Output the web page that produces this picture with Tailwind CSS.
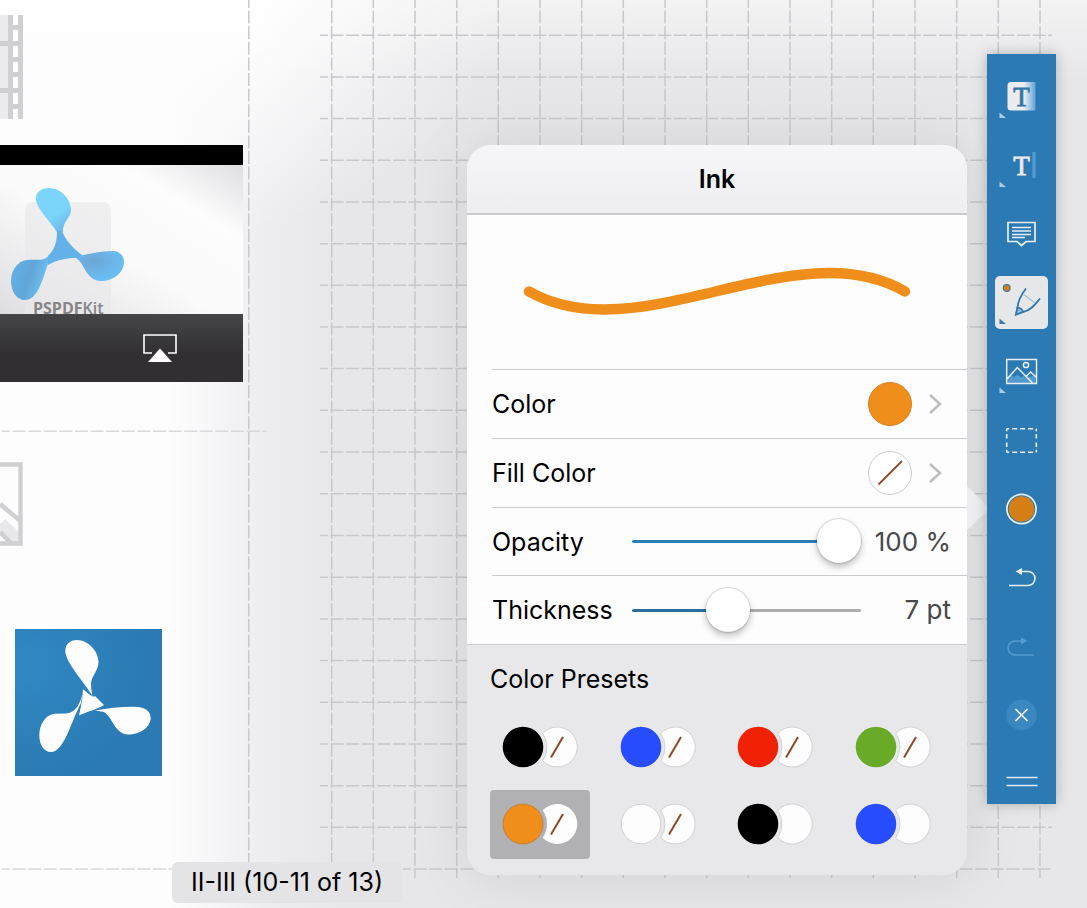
<!DOCTYPE html>
<html lang="en">
<head>
<meta charset="utf-8">
<meta name="viewport" content="width=device-width, initial-scale=1">
<title>Ink annotation inspector</title>
<script src="https://cdn.jsdelivr.net/npm/@tailwindcss/browser@4"></script>
</head>
<body class="bg-[#e6e6e8] font-['Inter','Liberation_Sans',sans-serif] text-black">
<main class="relative flex min-h-screen items-start overflow-hidden">

  <!-- Page paper with guide lines -->
  <div class="absolute inset-0 bg-linear-to-r from-[#fdfdfe] from-[170px] via-[#eeeef0] via-[260px] to-[#e7e7e9] to-[340px]"></div>
  <div class="absolute inset-x-0 top-0 h-72 bg-[radial-gradient(ellipse_340px_240px_at_160px_0px,#fdfdfe_30%,transparent)]"></div>
  <div class="absolute inset-x-0 top-0 h-20 bg-linear-to-b from-white/50 to-transparent"></div>
  <svg class="absolute inset-0 h-full w-full" fill="none" stroke="#c9c9cc" stroke-width="1.5" stroke-dasharray="13 2.6" aria-hidden="true">
    <g stroke-dashoffset="5">
      <path d="M320 35.3H1052M320 77H1052M320 118.5H1052M320 160.3H1052M320 202H1052M320 243.7H1052M320 285.3H1052M320 327H1052M320 368.6H1052M320 410.3H1052M320 452H1052M320 493.8H1052M320 535.5H1052M320 577.2H1052M320 619H1052M320 660.6H1052M320 702.3H1052M320 744H1052M320 785.7H1052M320 827.3H1052M403 869H1052"/>
      <path d="M248.8 0V862M331.7 0V862M373.3 0V862M415 0V878M456.8 0V878M498.3 0V878M540 0V878M581.7 0V878M623.3 0V878M665 0V878M706.7 0V878M748.3 0V878M790 0V878M831.7 0V878M873.3 0V878M915 0V878M956.7 0V878M998.3 0V878M1040 0V878"/>
      <path stroke="#d9d9dc" d="M2 431.3H267M2 869H172"/>
    </g>
  </svg>

  <!-- Document content -->
  <section class="relative flex w-[243px] shrink-0 flex-col items-start pt-[15px]" aria-label="Document page">
    <svg class="h-[104px] w-6" viewBox="0 0 24 104" aria-hidden="true">
      <path d="M0 0H8V104H0Z" fill="#ececee"/>
      <path d="M8 0H13V104H8ZM18 0H23V104H18ZM0 26H18V31H0ZM0 73H18V78H0ZM13 10H18V15H13ZM13 42H18V47H13ZM13 57H18V62H13ZM13 89H18V94H13Z" fill="#d0d0d3"/>
    </svg>
    <div class="mt-[26px] w-full">
      <div class="h-5 bg-black"></div>
      <svg class="block h-[149px] w-full overflow-visible" viewBox="0 165 243 149" role="img" aria-label="PSPDFKit video">
        <defs>
          <linearGradient id="d" x1="0" y1="1" x2="1" y2="0"><stop offset="0" stop-color="#dedee0"/><stop offset=".45" stop-color="#fafafb"/><stop offset=".75" stop-color="#fdfdfe"/><stop offset="1" stop-color="#dfdfe1"/></linearGradient>
          <linearGradient id="b1" x1="0" y1="0" x2=".6" y2="1"><stop offset=".7" stop-color="#7bd4fc"/><stop offset="1" stop-color="#6dbcee"/></linearGradient>
          <radialGradient id="b2" cx=".4" cy=".35" r=".6"><stop offset="0" stop-color="#6ca6d6"/><stop offset="1" stop-color="#6bbef2"/></radialGradient>
          <linearGradient id="b3" x1="0" y1="0" x2="1" y2=".4"><stop offset="0" stop-color="#61b3ea"/><stop offset=".6" stop-color="#62a5d6"/><stop offset="1" stop-color="#6cc5f5"/></linearGradient>
        </defs>
        <path fill="url(#d)" d="M0 165H243V314H0Z"/>
        <path d="M25 314V211Q25 202 34 202H102Q111 202 111 211V314Z" fill="#e8e8ea" opacity=".65"/>
        <path fill="url(#b1)" d="M57 232C50 221 36 208 36 199C36 192 41 188 49 188C61 188 71 199 71 210C71 218 62 222 63 232Z"/>
        <path fill="url(#b3)" d="M49 255C44 262 36 259 27 260C17 261 11 271 11 281C11 292 17 300 25 300C38 300 42 280 48 264Z"/>
        <path fill="url(#b2)" d="M73 257C86 255 98 251 113 251C120 251 124 256 124 262C124 273 113 281 101 281C86 281 84 262 76 258Z"/>
        <path fill="#62b1e8" d="M57 231H62C66 241 74 249 82 255C82 257 79 258 75 258C66 258 57 260 48 265L48 256C55 249 57 242 57 231Z"/>
        <text x="33" y="314" font-family="Open Sans" font-weight="700" font-size="16" fill="#858588">PSPDF<tspan font-weight="600">Kit</tspan></text>
      </svg>
      <div class="flex h-[68px] items-center justify-end bg-linear-to-b from-[#454447] to-[#312f32] to-60% pr-[65px]">
        <button type="button" aria-label="AirPlay" class="block">
          <svg class="block h-[30px] w-9" viewBox="0 0 36 30" fill="none"><path d="M10 20H2V2H34V20H26" stroke="#fff" stroke-width="1.6"/><path d="M6 29L18 15.500L30 29Z" fill="#fff"/></svg>
        </button>
      </div>
    </div>
    <svg class="mt-20 block h-[84px] w-6" viewBox="0 0 24 84" fill="none" aria-hidden="true">
      <path d="M0 62L5 57L21 72V80H8L0 72Z" fill="#e9e9eb"/>
      <path d="M0 2.500H20.500V81.500H0M0 42L21 59.500M0 70L11 81" stroke="#d0d0d3" stroke-width="4.500"/>
    </svg>
    <svg class="mt-[83px] ml-[15px] block size-[147px]" viewBox="15 629 147 147" role="img" aria-label="PSPDFKit logo">
      <defs><radialGradient id="bg" cx=".1" cy=".25" r=".8"><stop offset="0" stop-color="#3088c3"/><stop offset="1" stop-color="#2b7ab3"/></radialGradient></defs>
      <path fill="url(#bg)" d="M15 629H162V776H15Z"/>
      <g fill="#fdfdfe">
        <path d="M92.500 696C84 682 65.300 662 65.300 651C65.300 644 70 640 77 640C88 640 98.500 651 98.500 662C98.500 671 91 676 91 684C91 689 92 692 92.500 696Z"/>
        <path d="M83 689C90 695 93 698 95 696L104 705C96 710 88 711 79 715.500L82 701Z"/>
        <path d="M83 689C81 706 74 713 66 713.500L54 713.700C45 715 39.300 725 39.300 735C39.300 745 44 752 51 752C64 752 70 724 81 703Z"/>
        <path d="M95 710.500C109 708 121 706.500 134 706.700C145 706.700 150.700 711 150.700 718C150.700 727 140 734.500 128 734.500C113 734 112 712 101 711.500Z"/>
      </g>
    </svg>
  </section>

  <p class="absolute bottom-[5px] left-[172px] rounded-md bg-[#e4e4e6] px-[19px] py-1.5 text-[25px] leading-[29px] whitespace-nowrap">II-III (10-11 of 13)</p>

  <!-- Ink inspector popover -->
  <section class="relative mt-[145px] mr-5 ml-auto w-[500px] shrink-0 rounded-[24px] shadow-[0_0_60px_rgba(0,0,0,0.1)]" aria-labelledby="title">
    <svg class="absolute top-[341px] left-full h-11 w-5" viewBox="0 0 20 44" aria-hidden="true"><path d="M0 0L20 20V25L0 44Z" fill="#ededef"/></svg>
    <div class="overflow-hidden rounded-[24px] bg-[#e8e8ea]">
      <header class="flex h-[70px] items-center justify-center border-b-2 border-[#cacacd] bg-linear-to-b from-[#f6f6f8] to-[#eeeef0]">
        <h1 id="title" class="text-[25px] leading-8 font-semibold">Ink</h1>
      </header>
      <div class="bg-[#fdfdfe]">
        <svg class="block h-[154px] w-full" viewBox="0 0 500 154" fill="none" role="img" aria-label="Stroke preview">
          <path d="M62 76.500C172 139 328 13 438 76.500" stroke="#ef8e1b" stroke-width="10.500" stroke-linecap="round"/>
        </svg>
        <div class="ml-[25px] text-[25px] leading-8">
          <button type="button" class="flex h-[69px] w-full items-center border-t border-[#cbcbce] pr-6">
            <span>Color</span>
            <span class="ml-auto size-11 rounded-full border border-[#d5831e] bg-[#ef8e1b]"></span>
            <svg class="ml-[15px] h-6 w-4" viewBox="0 0 16 24" fill="none"><path d="M3 3L13 12L3 21" stroke="#bdbdc0" stroke-width="2.500"/></svg>
          </button>
          <button type="button" class="flex h-[69px] w-full items-center border-t border-[#cbcbce] pr-6">
            <span>Fill Color</span>
            <svg class="ml-auto size-11" viewBox="0 0 44 44" fill="none"><circle cx="22" cy="22" r="21.500" fill="#fff" stroke="#cfcfd4"/><path d="M10.500 33.500L34 10" stroke="#8b4a24" stroke-width="1.800"/></svg>
            <svg class="ml-[15px] h-6 w-4" viewBox="0 0 16 24" fill="none"><path d="M3 3L13 12L3 21" stroke="#bdbdc0" stroke-width="2.500"/></svg>
          </button>
          <div class="flex h-[68px] items-center border-t border-[#cbcbce] pr-4">
            <label for="opacity" class="w-[140px]">Opacity</label>
            <input id="opacity" type="range" min="0" max="100" value="100" class="h-11 w-[229px] cursor-pointer appearance-none bg-transparent [&::-webkit-slider-runnable-track]:h-[3px] [&::-webkit-slider-runnable-track]:rounded-full [&::-webkit-slider-runnable-track]:bg-[#2b7fb8] [&::-webkit-slider-thumb]:-mt-[21px] [&::-webkit-slider-thumb]:size-11 [&::-webkit-slider-thumb]:appearance-none [&::-webkit-slider-thumb]:rounded-full [&::-webkit-slider-thumb]:bg-white [&::-webkit-slider-thumb]:shadow-[0_0_1px_1px_rgba(0,0,0,0.12),0_4px_7px_rgba(0,0,0,0.25)]">
            <output for="opacity" class="ml-auto text-[26px] text-[#48484b]">100 %</output>
          </div>
          <div class="flex h-[69px] items-center border-t border-[#cbcbce] pr-4">
            <label for="thickness" class="w-[140px]">Thickness</label>
            <input id="thickness" type="range" min="0" max="100" value="40" class="h-11 w-[229px] cursor-pointer appearance-none bg-transparent [&::-webkit-slider-runnable-track]:h-[3px] [&::-webkit-slider-runnable-track]:rounded-full [&::-webkit-slider-runnable-track]:bg-[linear-gradient(to_right,#2b6f9f_40%,#acacae_40%)] [&::-webkit-slider-thumb]:-mt-[21px] [&::-webkit-slider-thumb]:size-11 [&::-webkit-slider-thumb]:appearance-none [&::-webkit-slider-thumb]:rounded-full [&::-webkit-slider-thumb]:bg-white [&::-webkit-slider-thumb]:shadow-[0_0_1px_1px_rgba(0,0,0,0.12),0_4px_7px_rgba(0,0,0,0.25)]">
            <output for="thickness" class="ml-auto text-[26px] text-[#48484b]">7 pt</output>
          </div>
        </div>
      </div>
      <div class="border-t border-[#cbcbce] pt-[18px] pr-6 pb-4 pl-[23px]">
        <svg class="hidden" aria-hidden="true">
          <defs>
            <path id="fill" d="M52.700 20.300A20 20 0 1 1 52.700 47.700A24 24 0 0 0 52.700 20.300Z"/>
            <path id="slash" d="M61 44.500L73 24" stroke="#8b4a24" stroke-width="2"/>
          </defs>
        </svg>
        <h2 class="text-[25px] leading-8">Color Presets</h2>
        <div class="mt-[18px] grid grid-cols-[repeat(4,100px)] justify-between gap-y-2">
          <button type="button" aria-label="Black, no fill" class="rounded"><svg class="h-[69px] w-[100px]" viewBox="0 0 100 69"><use href="#fill" fill="#fdfdfe" stroke="#d2d2d5"/><circle cx="33" cy="34" r="20.300"/><use href="#slash"/></svg></button>
          <button type="button" aria-label="Blue, no fill" class="rounded"><svg class="h-[69px] w-[100px]" viewBox="0 0 100 69"><use href="#fill" fill="#fdfdfe" stroke="#d2d2d5"/><circle cx="33" cy="34" r="20.300" fill="#274dfe"/><use href="#slash"/></svg></button>
          <button type="button" aria-label="Red, no fill" class="rounded"><svg class="h-[69px] w-[100px]" viewBox="0 0 100 69"><use href="#fill" fill="#fdfdfe" stroke="#d2d2d5"/><circle cx="33" cy="34" r="20.300" fill="#f12106"/><use href="#slash"/></svg></button>
          <button type="button" aria-label="Green, no fill" class="rounded"><svg class="h-[69px] w-[100px]" viewBox="0 0 100 69"><use href="#fill" fill="#fdfdfe" stroke="#d2d2d5"/><circle cx="33" cy="34" r="20.300" fill="#6aaa29"/><use href="#slash"/></svg></button>
          <button type="button" aria-label="Orange, no fill" aria-pressed="true" class="rounded bg-[#b1b1b3]"><svg class="h-[69px] w-[100px]" viewBox="0 0 100 69"><use href="#fill" fill="#fdfdfe"/><circle cx="33" cy="34" r="20" fill="#ef8e1b" stroke="#b87a35" stroke-width=".7"/><use href="#slash"/></svg></button>
          <button type="button" aria-label="White, no fill" class="rounded"><svg class="h-[69px] w-[100px]" viewBox="0 0 100 69"><use href="#fill" fill="#fdfdfe" stroke="#d2d2d5"/><circle cx="33" cy="34" r="19.800" fill="#fdfdfe" stroke="#d2d2d5"/><use href="#slash"/></svg></button>
          <button type="button" aria-label="Black, white fill" class="rounded"><svg class="h-[69px] w-[100px]" viewBox="0 0 100 69"><use href="#fill" fill="#fdfdfe" stroke="#d2d2d5"/><circle cx="33" cy="34" r="20.300"/></svg></button>
          <button type="button" aria-label="Blue, white fill" class="rounded"><svg class="h-[69px] w-[100px]" viewBox="0 0 100 69"><use href="#fill" fill="#fdfdfe" stroke="#d2d2d5"/><circle cx="33" cy="34" r="20.300" fill="#274dfe"/></svg></button>
        </div>
      </div>
    </div>
  </section>

  <!-- Annotation toolbar -->
  <nav class="relative mt-[54px] mr-[31px] flex w-[69px] shrink-0 flex-col items-center bg-[#2b7ab3] pt-4 pb-[17px] shadow-[0_0_12px_rgba(0,0,0,0.25)]" aria-label="Annotation tools">
    <div class="flex h-[672px] flex-col justify-between">
      <button type="button" aria-label="Highlight" class="block"><svg class="block size-[53px]" viewBox="0 0 53 53"><defs><linearGradient id="h"><stop offset=".6" stop-color="#ececee"/><stop offset="1" stop-color="#5fa3d6"/></linearGradient></defs><path d="M16 12H40.500V40.500H16Q12.500 40.500 12.500 37V15.500Q12.500 12 16 12Z" fill="url(#h)"/><text x="26.500" y="35.500" text-anchor="middle" font-family="Liberation Serif" font-size="27" fill="#3276a8" stroke="#3276a8" stroke-width=".8">T</text><path d="M4.500 42.500V48H11Z" fill="#a9cde6"/></svg></button>
      <button type="button" aria-label="Text" class="block"><svg class="block size-[53px]" viewBox="0 0 53 53"><text x="26.500" y="35.500" text-anchor="middle" font-family="Liberation Serif" font-size="27" fill="#ececee" stroke="#ececee" stroke-width=".8">T</text><path d="M37.500 13H40.500V39H37.500Z" fill="#559bd0"/><path d="M4.500 42.500V48H11Z" fill="#a9cde6"/></svg></button>
      <button type="button" aria-label="Note" class="block"><svg class="block size-[53px]" viewBox="0 0 53 53" fill="none" stroke="#e9eef2" stroke-width="1.700"><path d="M13 14.500H40V33.500H31L26.500 37.500L22 33.500H13Z"/><path d="M17 19.500H36M17 23H36M17 26.500H36M17 29.500H30"/></svg></button>
      <button type="button" aria-label="Ink" aria-pressed="true" class="block rounded-[5px] bg-[#e6e7e9]"><svg class="block size-[53px]" viewBox="0 0 53 53" fill="none"><circle cx="11.700" cy="12" r="3.400" fill="#d57f17" stroke="#47759a" stroke-width="1.200"/><path d="M28.500 18.500L39.500 26.500" stroke="#a8bfd2" stroke-width="1.200"/><path d="M31 12.500C26 19 23 25 22.500 31.500L21 38.500L28 36C35 35 40 29 45 22.500" stroke="#3278ab" stroke-width="1.800"/><path d="M22.500 31.500L21 38.500L28 36Q27 32 22.500 31.500Z" fill="#8bbbdf" stroke="#3278ab" stroke-width="1.600"/><path d="M4.500 42.500V48H11Z" fill="#3f7ca9"/></svg></button>
      <button type="button" aria-label="Image" class="block"><svg class="block size-[53px]" viewBox="0 0 53 53" fill="none" stroke="#e9eef2" stroke-width="1.500"><path d="M13 33L16 30L19 32L22 30L26 32L30 31L35 32L40 30V38H13Z" fill="#539ace" stroke="none"/><path d="M11.700 14.500H41.500V38.500H11.700ZM12 34L22.300 22.500L38 38.500M31 31.500L35.700 27L41.500 32.500"/><circle cx="31" cy="20" r="2.600"/><path d="M4.500 42.500V48H11Z" fill="#a9cde6" stroke="none"/></svg></button>
      <button type="button" aria-label="Select" class="block"><svg class="block size-[53px]" viewBox="0 0 53 53" fill="none" stroke="#e9eef2" stroke-width="1.600"><path d="M11.700 14.700H41.300M11.700 38.300H41.300" stroke-dasharray="2.500 3 5 2.900 5 2.900 5 3"/><path d="M11.700 14.700V38.300M41.300 14.700V38.300" stroke-dasharray="2.500 2.800 4.500 4 4.500 2.800"/></svg></button>
      <button type="button" aria-label="Ink color" class="block"><svg class="block size-[53px]" viewBox="0 0 53 53"><circle cx="26.500" cy="26" r="14.600" fill="none" stroke="#e9eef2" stroke-width="1.700"/><circle cx="26.500" cy="26" r="12.800" fill="#d57f17"/></svg></button>
      <button type="button" aria-label="Undo" class="block"><svg class="block size-[53px]" viewBox="0 0 53 53" fill="none" stroke="#e9eef2" stroke-width="1.600"><path d="M14 34.500H33A6.800 6.800 0 0 0 33 20.500H24"/><path d="M20.500 20.500L27 17V24Z" fill="#e9eef2" stroke="none"/></svg></button>
      <button type="button" aria-label="Redo" disabled class="block"><svg class="block size-[53px]" viewBox="0 0 53 53" fill="none" stroke="#559bd0" stroke-width="1.500"><path d="M39 35H20A6.800 6.800 0 0 1 20 21H29"/><path d="M32.500 21L26 17.500V24.500Z" fill="#559bd0" stroke="none"/></svg></button>
      <button type="button" aria-label="Close" class="block"><svg class="block size-[53px]" viewBox="0 0 53 53"><circle cx="26.500" cy="26" r="15.300" fill="#3b88c1"/><path d="M20.500 20L32.500 32M32.500 20L20.500 32" stroke="#eceff2" stroke-width="1.700"/></svg></button>
    </div>
    <button type="button" aria-label="Move toolbar" class="mt-[34px] block"><svg class="block h-[11px] w-8" viewBox="0 0 32 11"><path d="M.5 1.500H31.500M.5 9.500H31.500" stroke="#dcebf4" stroke-width="1.600"/></svg></button>
  </nav>
</main>
</body>
</html>
